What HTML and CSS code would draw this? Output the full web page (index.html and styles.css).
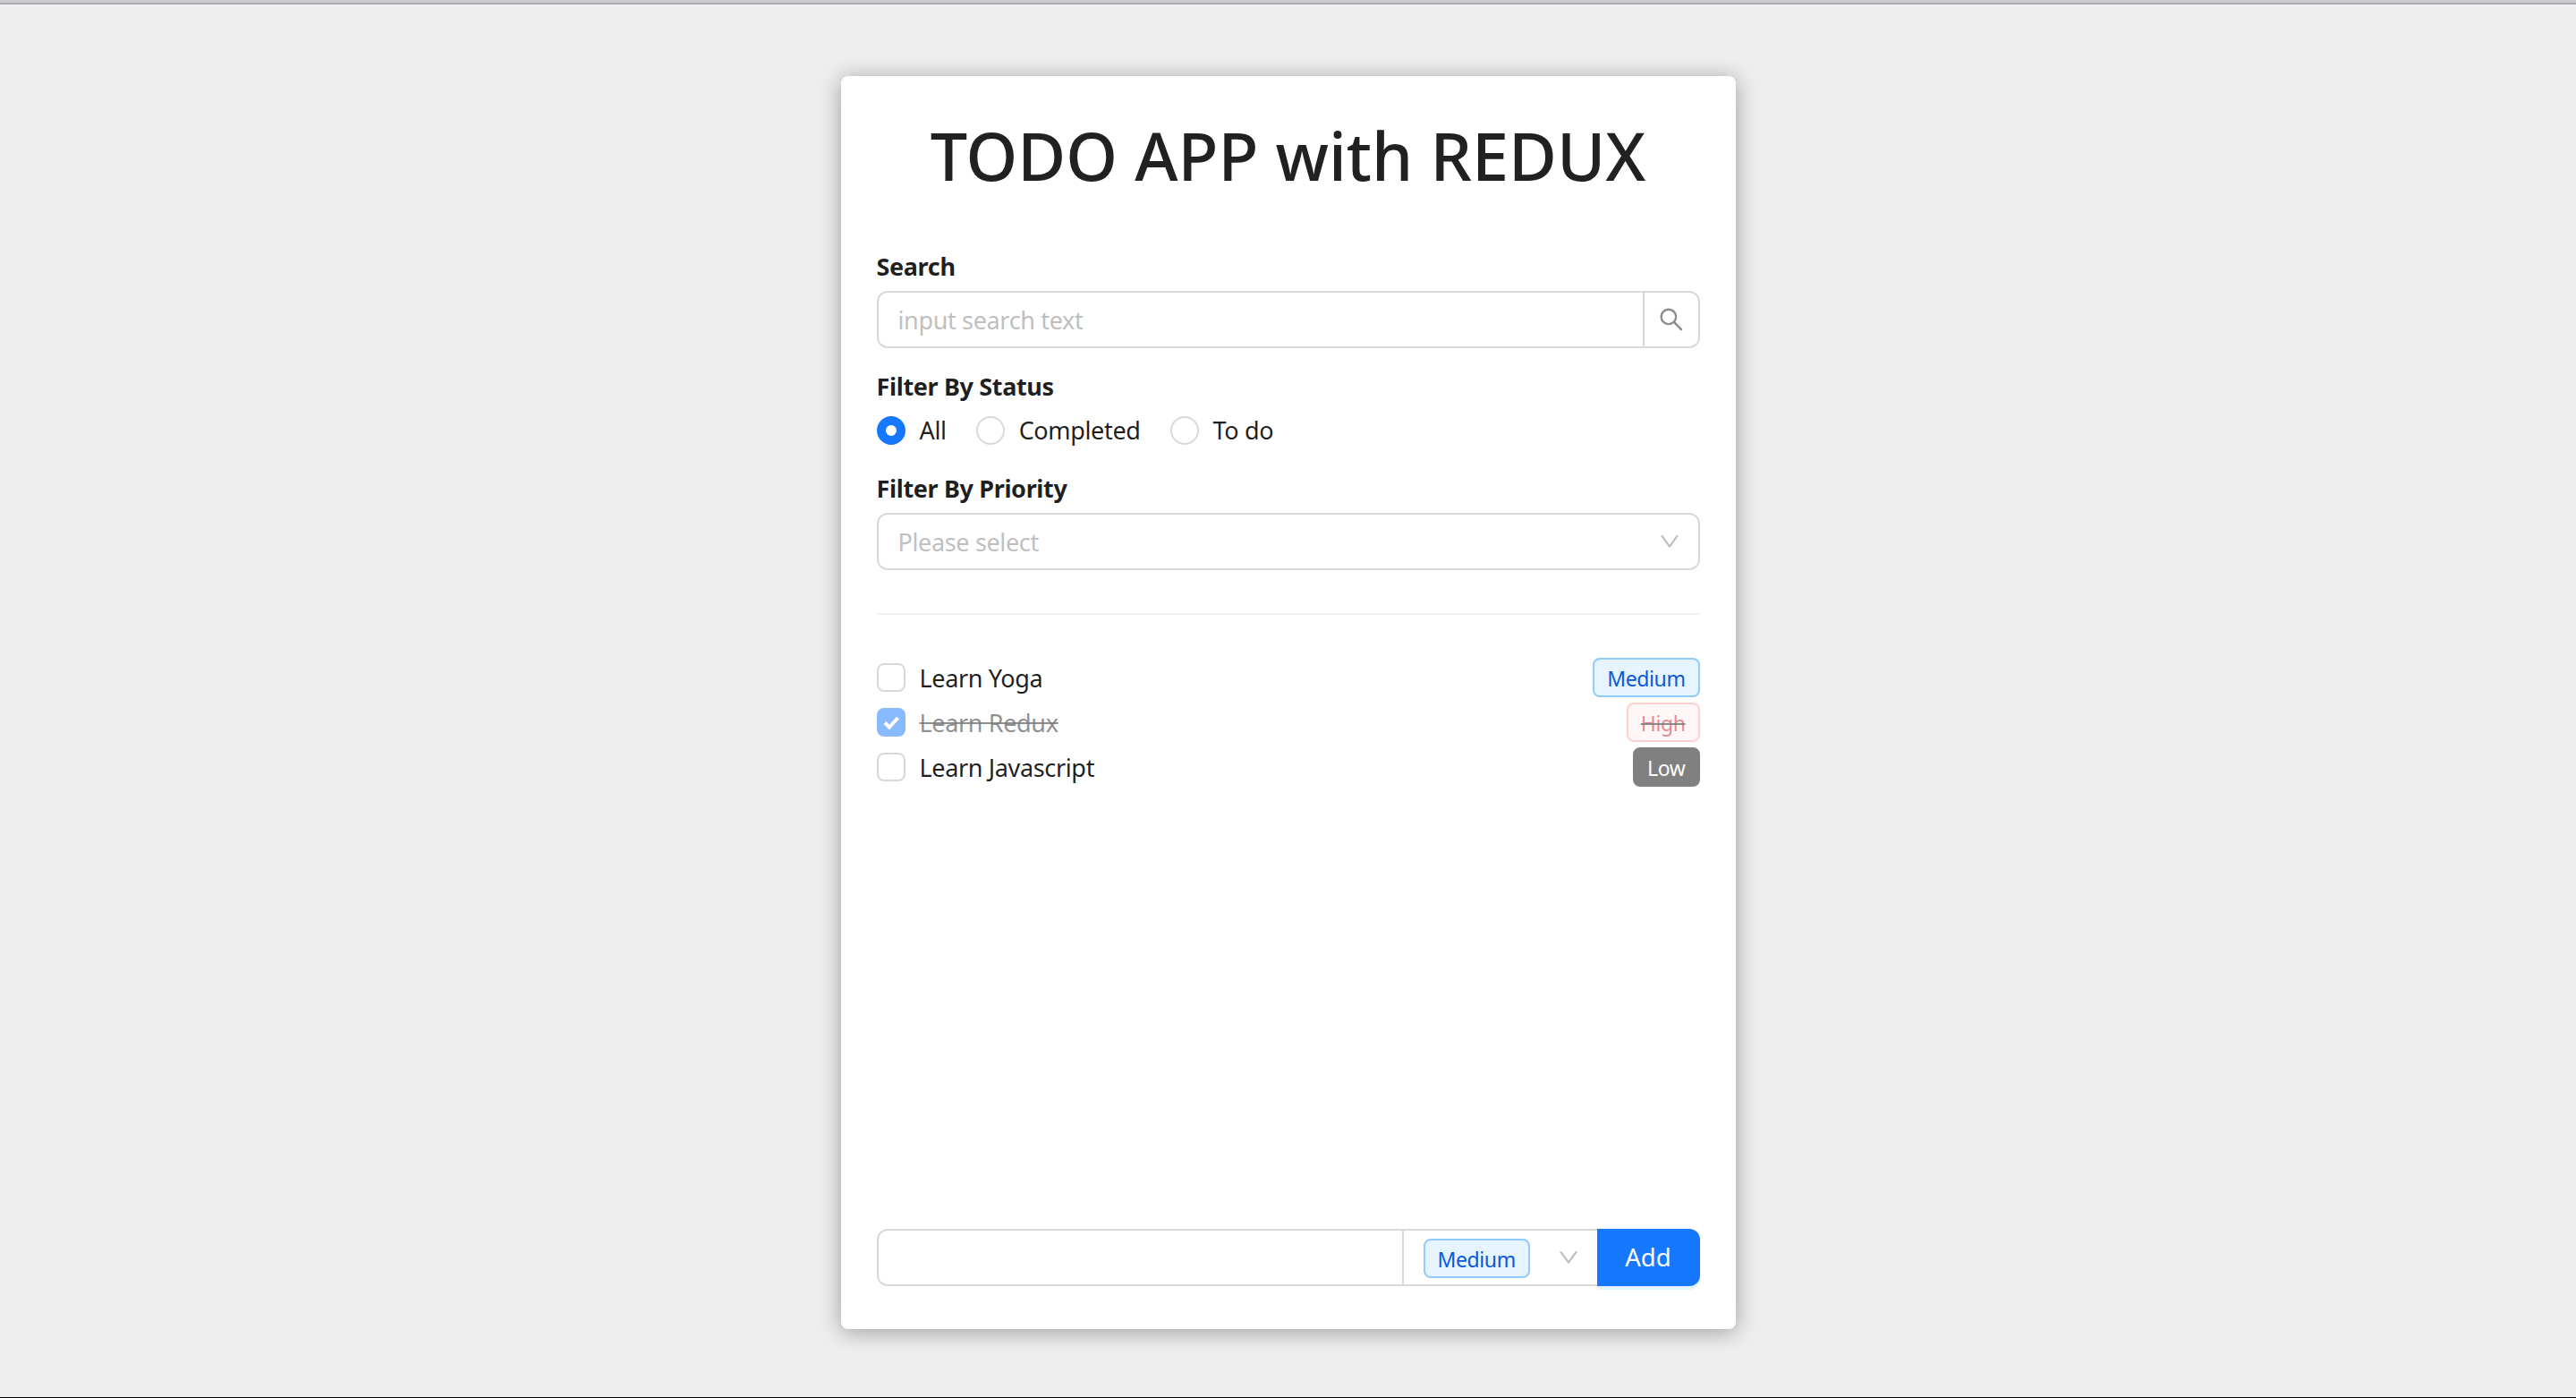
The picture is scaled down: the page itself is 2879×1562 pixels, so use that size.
FILE: index.html
```html
<!DOCTYPE html>
<html lang="en">
<head>
  <meta charset="UTF-8">
  <meta name="viewport" content="width=device-width, initial-scale=1.0">
  <title>TODO APP with REDUX</title>
  <link rel="stylesheet" href="styles.css">
</head>
<body>
  <div class="top-line"></div>
  <main class="page">
    <div class="card">
      <h1 class="title">TODO APP with REDUX</h1>

      <!-- Filters -->
      <div class="filters">
        <div class="filter">
          <div class="label">Search</div>
          <div class="search">
            <input class="search-input" type="text" placeholder="input search text">
            <button class="search-btn" type="button" aria-label="search">
              <svg viewBox="64 64 896 896" width="28" height="28" fill="currentColor"><path d="M909.6 854.5L649.9 594.8C690.2 542.7 712 479 712 412c0-80.2-31.3-155.4-87.9-212.1-56.6-56.7-132-87.9-212.1-87.9s-155.5 31.3-212.1 87.9C143.2 256.5 112 331.8 112 412c0 80.1 31.3 155.5 87.9 212.1C256.5 680.8 331.8 712 412 712c67 0 130.6-21.8 182.7-62l259.7 259.6a8.2 8.2 0 0011.6 0l43.6-43.5a8.2 8.2 0 000-11.6zM570.4 570.4C528 612.7 471.8 636 412 636s-116-23.3-158.4-65.6C211.3 528 188 471.8 188 412s23.3-116.1 65.6-158.4C296 211.3 352.2 188 412 188s116.1 23.2 158.4 65.6S636 352.2 636 412s-23.3 116.1-65.6 158.4z"/></svg>
            </button>
          </div>
        </div>

        <div class="filter">
          <div class="label">Filter By Status</div>
          <div class="radios">
            <label class="radio radio-on"><span class="radio-dot"></span>All</label>
            <label class="radio"><span class="radio-dot"></span>Completed</label>
            <label class="radio"><span class="radio-dot"></span>To do</label>
          </div>
        </div>

        <div class="filter">
          <div class="label">Filter By Priority</div>
          <div class="select">
            <span class="placeholder">Please select</span>
            <svg class="chevron" viewBox="64 64 896 896" width="24" height="24" fill="currentColor"><path d="M884 256h-75c-5.100 0-9.900 2.500-12.900 6.600L512 654.200 227.900 262.600c-3-4.100-7.800-6.600-12.900-6.600h-75c-6.500 0-10.300 7.400-6.500 12.700l352.600 486.100c12.800 17.600 39 17.600 51.700 0l352.600-486.100c3.900-5.300.1-12.700-6.400-12.700z"/></svg>
          </div>
        </div>
      </div>

      <hr class="divider">

      <!-- Todo list -->
      <div class="todos">
        <div class="todo">
          <span class="check"></span>
          <span class="todo-name">Learn Yoga</span>
          <span class="tag tag-blue">Medium</span>
        </div>
        <div class="todo todo-done">
          <span class="check">
            <svg viewBox="0 0 32 32" width="32" height="32"><path d="M9 16.500l5 5 9.500-10.500" fill="none" stroke="#fff" stroke-width="4"/></svg>
          </span>
          <span class="todo-name">Learn Redux</span>
          <span class="tag tag-red">High</span>
        </div>
        <div class="todo">
          <span class="check"></span>
          <span class="todo-name">Learn Javascript</span>
          <span class="tag tag-gray">Low</span>
        </div>
      </div>

      <!-- Add form -->
      <div class="add-form">
        <input class="add-input" type="text">
        <div class="add-select">
          <span class="tag tag-blue">Medium</span>
          <svg class="chevron" viewBox="64 64 896 896" width="24" height="24" fill="currentColor"><path d="M884 256h-75c-5.100 0-9.900 2.500-12.900 6.600L512 654.200 227.900 262.600c-3-4.100-7.800-6.600-12.900-6.600h-75c-6.500 0-10.300 7.400-6.500 12.700l352.600 486.100c12.800 17.600 39 17.600 51.700 0l352.600-486.100c3.900-5.300.1-12.700-6.400-12.700z"/></svg>
        </div>
        <button class="add-btn" type="button">Add</button>
      </div>
    </div>
  </main>
  <div class="bottom-line"></div>
</body>
</html>
```

FILE: styles.css
```css
/* General Styles */
* {
  box-sizing: border-box;
}

html,
body {
  height: 100%;
}

body {
  margin: 0;
  display: flex;
  flex-direction: column;
  background-color: #eeeeee;
  color: rgba(0, 0, 0, 0.88);
  font-family: 'Noto Sans', 'Open Sans', sans-serif;
  font-size: 27px;
  letter-spacing: -0.35px;
  line-height: 44px;
}

.top-line {
  height: 5px;
  background: linear-gradient(#c9c9ce 0 3px, #aaaab1 3px);
}

.bottom-line {
  height: 1px;
  background-color: #000;
}

.page {
  flex: 1;
  display: flex;
  justify-content: center;
  padding-top: 80px;
}

/* Card */
.card {
  width: 1000px;
  height: 1400px;
  padding: 40px 40px 48px;
  display: flex;
  flex-direction: column;
  background-color: #fff;
  border-radius: 8px;
  box-shadow: 0 3px 24px rgba(0, 0, 0, 0.35);
}

.title {
  margin: 0;
  height: 96px;
  font-size: 73.7px;
  font-weight: 500;
  letter-spacing: 0;
  line-height: 98px;
  text-align: center;
  color: #212121;
}

/* Filters */
.filters {
  margin-top: 52px;
}

.filter {
  margin-bottom: 17px;
}

.label {
  height: 52px;
  font-weight: 700;
  line-height: 50px;
}

.filter:nth-child(2) .label {
  line-height: 52px;
}

.search,
.select {
  display: flex;
  height: 64px;
  border: 2px solid #d9d9d9;
  border-radius: 12px;
  background-color: #fff;
}

.search-input {
  flex: 1;
  min-width: 0;
  padding: 2px 22px 0;
  border: 0;
  border-radius: 12px 0 0 12px;
  outline: none;
  font: inherit;
  letter-spacing: inherit;
}

.search-input::placeholder {
  color: #bfbfbf;
}

.search-btn {
  width: 62px;
  padding: 0;
  display: flex;
  align-items: center;
  justify-content: center;
  border: 0;
  border-left: 2px solid #d9d9d9;
  background: none;
  color: rgba(0, 0, 0, 0.45);
}

.radios {
  display: flex;
  gap: 33px;
  height: 46px;
  align-items: center;
}

.radio {
  display: flex;
  align-items: center;
  gap: 16px;
  line-height: 46px;
}

.radio-dot {
  width: 32px;
  height: 32px;
  border: 2px solid #d9d9d9;
  border-radius: 50%;
}

.radio-on .radio-dot {
  border: 10px solid #1677ff;
  background-color: #fff;
}

.select {
  align-items: center;
  justify-content: space-between;
  padding: 0 20px 0 22px;
}

.placeholder {
  padding-top: 2px;
  color: #bfbfbf;
}

.chevron {
  color: #bfbfbf;
}

.divider {
  margin: 31px 0 48px;
  height: 2px;
  border: 0;
  background-color: #f0f0f0;
}

/* Todo list */
.todos {
  flex: 1;
}

.todo {
  display: flex;
  align-items: center;
  height: 44px;
  margin-bottom: 6px;
}

.check {
  width: 32px;
  height: 32px;
  margin-right: 16px;
  border: 2px solid #d9d9d9;
  border-radius: 8px;
  overflow: hidden;
}

.check svg {
  display: block;
  margin: -2px;
}

.todo-name {
  flex: 1;
  padding-top: 2px;
}

.todo-done {
  opacity: 0.5;
}

.todo-done .todo-name,
.todo-done .tag {
  text-decoration: line-through rgba(0, 0, 0, 0.88);
}

.todo-done .check {
  border-color: #1677ff;
  background-color: #1677ff;
}

/* Tags */
.tag {
  height: 44px;
  padding: 0 14px;
  border: 2px solid;
  border-radius: 8px;
  font-size: 23px;
  letter-spacing: -0.4px;
  line-height: 42px;
}

.tag-blue {
  color: #0958d9;
  background-color: #e6f4ff;
  border-color: #91caff;
}

.tag-red {
  color: #cf1322;
  background-color: #fff1f0;
  border-color: #ffa39e;
}

.tag-gray {
  color: #fff;
  background-color: #808080;
  border-color: #808080;
}

/* Add form */
.add-form {
  display: flex;
  height: 64px;
}

.add-input {
  width: 589px;
  padding: 0 22px;
  border: 2px solid #d9d9d9;
  border-radius: 12px 0 0 12px;
  outline: none;
  font: inherit;
}

.add-select {
  display: flex;
  align-items: center;
  justify-content: space-between;
  width: 218px;
  margin-left: -2px;
  padding: 0 20px 0 22px;
  border: 2px solid #d9d9d9;
  border-right: 0;
}

.add-select .tag {
  margin-top: 2px;
}

.add-btn {
  width: 115px;
  padding: 0;
  border: 0;
  border-radius: 0 12px 12px 0;
  background-color: #1677ff;
  box-shadow: 0 4px 0 #e6f4ff;
  color: #fff;
  font: inherit;
  font-size: 27.5px;
}
```
